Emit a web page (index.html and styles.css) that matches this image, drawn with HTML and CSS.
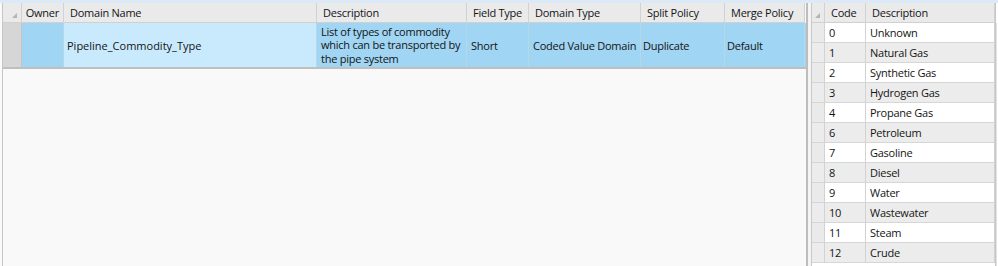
FILE: index.html
```html
<!DOCTYPE html>
<html>

<head>
    <meta charset="utf-8">
    <title>Domains</title>
    <link rel="stylesheet" href="styles.css">
</head>

<body>
    <div class="topbar"></div>

    <div class="panes">
        <div class="pane domains">
            <div class="row head">
                <div class="cell sel"><span class="corner"></span></div>
                <div class="cell">Owner</div>
                <div class="cell">Domain Name</div>
                <div class="cell">Description</div>
                <div class="cell">Field Type</div>
                <div class="cell">Domain Type</div>
                <div class="cell">Split Policy</div>
                <div class="cell">Merge Policy</div>
            </div>
            <div class="row data selected">
                <div class="cell sel"></div>
                <div class="cell"></div>
                <div class="cell current">Pipeline_Commodity_Type</div>
                <div class="cell">List of types of commodity which can be transported by the pipe system</div>
                <div class="cell">Short</div>
                <div class="cell">Coded Value Domain</div>
                <div class="cell">Duplicate</div>
                <div class="cell">Default</div>
            </div>
        </div>

        <div class="splitter"></div>

        <div class="pane codes">
            <div class="codes-grid">
                <div class="row head">
                    <div class="cell sel"><span class="corner"></span></div>
                    <div class="cell">Code</div>
                    <div class="cell">Description</div>
                </div>
                <div id="code-rows"></div>
            </div>
            <div class="vscroll"></div>
        </div>
    </div>

    <script type="text/javascript">
        var codes = [
            [0, "Unknown"], [1, "Natural Gas"], [2, "Synthetic Gas"],
            [3, "Hydrogen Gas"], [4, "Propane Gas"], [6, "Petroleum"],
            [7, "Gasoline"], [8, "Diesel"], [9, "Water"],
            [10, "Wastewater"], [11, "Steam"], [12, "Crude"]
        ];

        var holder = document.getElementById("code-rows");
        codes.forEach(function (d, i) {
            var row = document.createElement("div");
            row.className = "row data" + (i % 2 ? " odd" : "");
            row.innerHTML = '<div class="cell sel"></div>' +
                '<div class="cell">' + d[0] + '</div>' +
                '<div class="cell">' + d[1] + '</div>';
            holder.appendChild(row);
        });
    </script>
</body>

</html>
```

FILE: styles.css
```css
html,
body {
    margin: 0;
    height: 100%;
}

body {
    font-family: "Open Sans", "Noto Sans", sans-serif;
    font-size: 11px;
    letter-spacing: -0.25px;
    color: #141414;
    background-color: #fafafa;
    overflow: hidden;
}

.topbar {
    height: 3px;
    background-color: #dce9f6;
}

.panes {
    display: flex;
    height: 263px;
}

.pane {
    height: 100%;
}

.domains {
    width: 803px;
    margin-left: 2px;
    border-left: 1px solid #c6c6c6;
    background-color: #f9f9f9;
}

.splitter {
    width: 3px;
    border-left: 2px solid #bdbdbd;
    border-right: 1px solid #c9c9c9;
    background-color: #f4f4f4;
}

.codes {
    flex: 1;
    display: flex;
    background-color: #ffffff;
}

.codes-grid {
    width: 183px;
    border-right: 1px solid #c6c6c6;
}

.vscroll {
    flex: 1;
    margin-top: 20px;
    background-color: #e3e3e3;
    border-right: 1px solid #ffffff;
}

.row {
    display: grid;
}

.domains .row {
    grid-template-columns: 19px 42px 253px 150px 62px 112px 84px 80px;
}

.codes .row {
    grid-template-columns: 13px 41px 129px;
}

.cell {
    box-sizing: border-box;
    border-right: 1px solid #d2d2d2;
    display: flex;
    align-items: center;
    padding: 0 4px;
    white-space: nowrap;
}

.head .cell {
    height: 20px;
    padding: 0 6px;
    background-color: #eaeaea;
    border-bottom: 1px solid #d0d0d0;
    position: relative;
}

.domains .head .cell:nth-child(2) {
    justify-content: flex-end;
    padding-right: 4px;
}

.head .sel {
    padding: 0;
}

.corner {
    position: absolute;
    right: 4px;
    bottom: 4px;
    width: 0;
    height: 0;
    border-left: 5px solid transparent;
    border-bottom: 5px solid #b4b4b4;
}

.domains .data {
    height: 46px;
    border-bottom: 2px solid #bfbfbf;
    box-sizing: border-box;
    background-color: #a0d5f3;
}

.domains .data .cell {
    border-right-color: #b6d7ea;
}

.domains .data .cell:nth-child(4) {
    white-space: normal;
    line-height: 13.5px;
    padding-right: 2px;
}

.domains .data .sel {
    background-color: #d6d6d6;
    border-right-color: #c4c4c4;
}

.domains .data .current {
    background-color: #c9eafd;
    padding-left: 3px;
    letter-spacing: 0;
}

.domains .data .cell:nth-child(7),
.domains .data .cell:nth-child(8) {
    padding-left: 2px;
}

.codes .data .cell {
    height: 20px;
    border-bottom: 1px solid #d6d6d6;
    background-color: #ffffff;
}

.codes .data.odd .cell {
    background-color: #ececec;
}

.codes .data .sel {
    background-color: #eaeaea;
}
```
